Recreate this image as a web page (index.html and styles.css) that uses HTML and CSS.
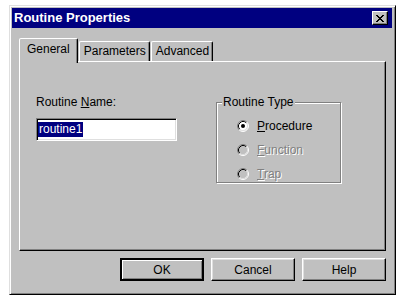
FILE: index.html
```
<!DOCTYPE html>
<html lang="en">
<head>
    <meta charset="UTF-8">
    <meta name="viewport" content="width=device-width, initial-scale=1.0">
    <title>Routine Properties</title>
    <link rel="stylesheet" href="styles.css">
</head>
<body>
    <div class="window">
        <!-- Title bar -->
        <div class="titlebar">
            <span class="title">Routine Properties</span>
            <button class="close-button" aria-label="Close">
                <svg width="8" height="7" viewBox="0 0 8 7">
                    <path d="M0 0h2v1h1v1h2V1h1V0h2v1H7v1H6v1H5v1h1v1h1v1h1v1H6V6H5V5H3v1H2v1H0V6h1V5h1V4h1V3H2V2H1V1H0z" fill="#000"/>
                </svg>
            </button>
        </div>

        <!-- Tabs -->
        <div class="tabs">
            <div class="tab active">General</div>
            <div class="tab">Parameters</div>
            <div class="tab">Advanced</div>
        </div>

        <!-- Tab panel -->
        <div class="panel">
            <div class="name-field">
                <label class="field-label">Routine <u>N</u>ame:</label>
                <div class="textbox"><span class="selected">routine1</span></div>
            </div>

            <fieldset class="groupbox">
                <legend>Routine Type</legend>
                <div class="radio-list">
                    <div class="radio-row">
                        <svg class="radio" width="12" height="12" viewBox="0 0 12 12">
                            <circle cx="6" cy="6" r="5" fill="#fff"/>
                            <path d="M2.11 9.89A5.5 5.5 0 0 1 9.89 2.11" stroke="#808080" fill="none"/>
                            <path d="M9.89 2.11A5.5 5.5 0 0 1 2.11 9.89" stroke="#fff" fill="none"/>
                            <path d="M2.82 9.18A4.5 4.5 0 0 1 9.18 2.82" stroke="#000" fill="none"/>
                            <path d="M9.18 2.82A4.5 4.5 0 0 1 2.82 9.18" stroke="#dfdfdf" fill="none"/>
                            <circle cx="6" cy="6" r="2" fill="#000"/>
                        </svg>
                        <span><u>P</u>rocedure</span>
                    </div>
                    <div class="radio-row disabled">
                        <svg class="radio" width="12" height="12" viewBox="0 0 12 12">
                            <circle cx="6" cy="6" r="5" fill="#c0c0c0"/>
                            <path d="M2.11 9.89A5.5 5.5 0 0 1 9.89 2.11" stroke="#808080" fill="none"/>
                            <path d="M9.89 2.11A5.5 5.5 0 0 1 2.11 9.89" stroke="#fff" fill="none"/>
                            <path d="M2.82 9.18A4.5 4.5 0 0 1 9.18 2.82" stroke="#000" fill="none"/>
                            <path d="M9.18 2.82A4.5 4.5 0 0 1 2.82 9.18" stroke="#dfdfdf" fill="none"/>
                        </svg>
                        <span><u>F</u>unction</span>
                    </div>
                    <div class="radio-row disabled">
                        <svg class="radio" width="12" height="12" viewBox="0 0 12 12">
                            <circle cx="6" cy="6" r="5" fill="#c0c0c0"/>
                            <path d="M2.11 9.89A5.5 5.5 0 0 1 9.89 2.11" stroke="#808080" fill="none"/>
                            <path d="M9.89 2.11A5.5 5.5 0 0 1 2.11 9.89" stroke="#fff" fill="none"/>
                            <path d="M2.82 9.18A4.5 4.5 0 0 1 9.18 2.82" stroke="#000" fill="none"/>
                            <path d="M9.18 2.82A4.5 4.5 0 0 1 2.82 9.18" stroke="#dfdfdf" fill="none"/>
                        </svg>
                        <span><u>T</u>rap</span>
                    </div>
                </div>
            </fieldset>
        </div>

        <!-- Dialog buttons -->
        <div class="buttons">
            <button class="button default">OK</button>
            <button class="button">Cancel</button>
            <button class="button">Help</button>
        </div>
    </div>
</body>
</html>
```

FILE: styles.css
```
* {
    margin: 0;
    padding: 0;
    box-sizing: border-box;
    font-family: "Liberation Sans", Arial, sans-serif;
}

body {
    background-color: white;
    font-size: 12px;
    line-height: 14px;
    color: black;
}

.window {
    width: 387px;
    height: 290px;
    margin: 5px 0 0 9px;
    padding: 2px 3px 2px 2px;
    background-color: #c0c0c0;
    border: 1px solid;
    border-color: #dfdfdf #000 #000 #dfdfdf;
    box-shadow: inset 1px 1px #fff, inset -1px -1px #808080;
}

.titlebar {
    height: 20px;
    display: flex;
    align-items: center;
    justify-content: space-between;
    padding-left: 2px;
    background-color: #000080;
}

.title {
    color: white;
    font-weight: bold;
    font-size: 13px;
}

.close-button {
    width: 16px;
    height: 14px;
    margin-right: 4px;
    display: flex;
    align-items: center;
    justify-content: center;
    background-color: #c0c0c0;
    border: 1px solid;
    border-color: #fff #000 #000 #fff;
    box-shadow: inset -1px -1px #808080;
}

.close-button svg {
    display: block;
}

.tabs {
    display: flex;
    align-items: flex-end;
    height: 23px;
    margin: 10px 6px 0 8px;
}

.tab {
    height: 20px;
    padding: 2px 3px 0 4px;
    border: 1px solid;
    border-bottom: none;
    border-color: #fff #000 transparent #fff;
    border-radius: 2px 2px 0 0;
    box-shadow: inset -1px 0 #808080;
    margin-right: 1px;
    white-space: nowrap;
}

.tab.active {
    position: relative;
    z-index: 1;
    height: 25px;
    margin: 0 1px -2px -1px;
    padding: 3px 7px 0 7px;
    background-color: #c0c0c0;
}

.panel {
    height: 190px;
    margin: 0 6px 0 7px;
    padding: 33px 0 0 16px;
    display: grid;
    grid-template-columns: 141px 125px;
    column-gap: 39px;
    align-items: start;
    border: 1px solid;
    border-color: #fff #000 #000 #fff;
    box-shadow: inset -1px -1px #808080;
}

.name-field {
    display: flex;
    flex-direction: column;
    gap: 9px;
}

.textbox {
    height: 23px;
    display: flex;
    align-items: center;
    padding-left: 1px;
    background-color: white;
    border: 1px solid;
    border-color: #808080 #fff #fff #808080;
    box-shadow: inset 1px 1px #000, inset -1px -1px #dfdfdf;
}

.selected {
    background-color: #000080;
    color: white;
    line-height: 15px;
    padding: 0 1px;
}

.groupbox {
    height: 88px;
    padding: 0 0 0 5px;
    border: 1px solid #808080;
    box-shadow: 1px 1px #fff, inset 1px 1px #fff;
}

.groupbox legend {
    padding: 0 1px;
    background-color: #c0c0c0;
    line-height: 14px;
}

.radio-list {
    padding: 5px 0 0 15px;
}

.radio-row {
    height: 24px;
    display: flex;
    align-items: center;
    gap: 8px;
}

.radio {
    display: block;
    flex-shrink: 0;
}

.radio-row.disabled {
    color: #808080;
    text-shadow: 1px 1px 0 #fff;
}

.buttons {
    display: flex;
    justify-content: flex-end;
    gap: 7px;
    margin: 7px 6px 0 0;
}

.button {
    width: 84px;
    height: 23px;
    font-size: 12px;
    background-color: #c0c0c0;
    color: black;
    border: 1px solid;
    border-color: #fff #000 #000 #fff;
    box-shadow: inset -1px -1px #808080, inset 1px 1px #dfdfdf;
}

.button.default {
    border: 2px solid #000;
    box-shadow: inset 1px 1px #fff, inset -1px -1px #808080;
}
```
